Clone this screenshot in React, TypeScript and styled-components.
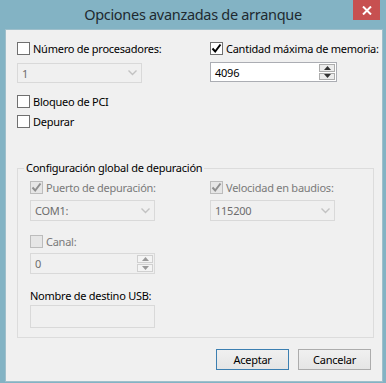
import React from "react";
import styled, { createGlobalStyle } from "styled-components";

const GlobalStyle = createGlobalStyle`
  html, body {
    margin: 0;
    padding: 0;
    background: #83b3c4;
  }
  * {
    box-sizing: border-box;
  }
`;

const Window = styled.div`
  width: 386px;
  height: 383px;
  background: #83b3c4;
  display: flex;
  flex-direction: column;
  font-family: "Noto Sans", "Open Sans", sans-serif;
  font-size: 11px;
  letter-spacing: -0.25px;
  color: #000;
`;

const TitleBar = styled.div`
  height: 29px;
  display: grid;
  grid-template-columns: 1fr auto 1fr;
  padding-right: 6px;
`;

const Title = styled.div`
  grid-column: 2;
  font-size: 14.5px;
  color: #1e2a30;
  line-height: 29px;
  padding-left: 6px;
  letter-spacing: -0.3px;
`;

const CloseButton = styled.div`
  grid-column: 3;
  justify-self: end;
  width: 27px;
  height: 20px;
  background: #c75050;
  display: flex;
  align-items: center;
  justify-content: center;
`;

const Client = styled.div`
  flex: 1;
  margin: 0 3px 1px 5px;
  background: #f0f0f0;
  border: 1px solid #9fbfcb;
  padding: 12px 0 0 11px;
  display: flex;
  flex-direction: column;
`;

const Columns = styled.div<{ $left: number }>`
  display: grid;
  grid-template-columns: ${(p) => p.$left}px 1fr;
`;

const Column = styled.div<{ $gap: number }>`
  display: flex;
  flex-direction: column;
  gap: ${(p) => p.$gap}px;
`;

const CheckRow = styled.label<{ $top?: number; $disabled?: boolean }>`
  display: flex;
  align-items: center;
  height: 13px;
  gap: 3px;
  margin-top: ${(p) => p.$top ?? 0}px;
  color: ${(p) => (p.$disabled ? "#7a7a7a" : "#000")};
  white-space: nowrap;
`;

const Box = styled.span<{ $disabled?: boolean }>`
  width: 13px;
  height: 13px;
  flex: none;
  border: 1px solid ${(p) => (p.$disabled ? "#bcbcbc" : "#707070")};
  background: ${(p) => (p.$disabled ? "#e6e6e6" : "#fff")};
  display: flex;
  align-items: center;
  justify-content: center;
`;

const Field = styled.div<{ $w: number; $h: number; $disabled?: boolean }>`
  width: ${(p) => p.$w}px;
  height: ${(p) => p.$h}px;
  border: 1px solid ${(p) => (p.$disabled ? "#d9d9d9" : "#abadb3")};
  background: ${(p) => (p.$disabled ? "#f0f0f0" : "#fff")};
  color: ${(p) => (p.$disabled ? "#6d6d6d" : "#000")};
  display: flex;
  align-items: center;
  padding-left: 4px;
`;

const FieldText = styled.span`
  flex: 1;
`;

const Chevron = styled.span`
  width: 17px;
  display: flex;
  justify-content: center;
`;

const SpinButtons = styled.div`
  width: 17px;
  height: 100%;
  display: flex;
  flex-direction: column;
  gap: 1px;
  padding: 1px 1px 1px 0;
`;

const SpinButton = styled.div<{ $disabled?: boolean }>`
  flex: 1;
  border: 1px solid ${(p) => (p.$disabled ? "#d0d0d0" : "#acacac")};
  background: ${(p) => (p.$disabled ? "#f4f4f4" : "#ececec")};
  display: flex;
  align-items: center;
  justify-content: center;
`;

const Group = styled.fieldset`
  margin: 33px 0 0 0;
  width: 357px;
  padding: 6px 0 9px 12px;
  border: 1px solid #dcdcdc;
  border-radius: 0;
  display: flex;
  flex-direction: column;
`;

const Legend = styled.legend`
  margin-left: -6px;
  padding: 0 2px;
  line-height: 14px;
  color: #000;
`;

const PlainLabel = styled.div`
  margin-top: 14px;
  line-height: 15px;
  color: #000;
`;

const Footer = styled.div`
  display: flex;
  justify-content: flex-end;
  gap: 9px;
  margin-top: 11px;
  padding-right: 11px;
`;

const Button = styled.div<{ $default?: boolean }>`
  width: 73px;
  height: 21px;
  border: 1px solid ${(p) => (p.$default ? "#3c7fb1" : "#acacac")};
  background: linear-gradient(#f0f0f0, #e5e5e5);
  display: flex;
  align-items: center;
  justify-content: center;
  color: #000;
`;

const Check = ({ checked, disabled }: { checked?: boolean; disabled?: boolean }) => (
  <Box $disabled={disabled}>
    {checked && (
      <svg width="11" height="11" viewBox="0 0 11 11">
        <path
          d="M1.5 5.5 L4.2 8.5 L9.5 1.5"
          fill="none"
          stroke={disabled ? "#8f8f8f" : "#000"}
          strokeWidth="2"
        />
      </svg>
    )}
  </Box>
);

const Checkbox = ({
  label,
  checked,
  disabled,
  top,
}: {
  label: string;
  checked?: boolean;
  disabled?: boolean;
  top?: number;
}) => (
  <CheckRow $top={top} $disabled={disabled}>
    <Check checked={checked} disabled={disabled} />
    {label}
  </CheckRow>
);

const Combo = ({ value, w, h }: { value: string; w: number; h: number }) => (
  <Field $w={w} $h={h} $disabled>
    <FieldText>{value}</FieldText>
    <Chevron>
      <svg width="9" height="6" viewBox="0 0 9 6">
        <path d="M0.5 0.5 L4.5 4.5 L8.5 0.5" fill="none" stroke="#c2c2c2" strokeWidth="1.4" />
      </svg>
    </Chevron>
  </Field>
);

const Spin = ({ value, w, h, disabled }: { value: string; w: number; h: number; disabled?: boolean }) => {
  const c = disabled ? "#9a9a9a" : "#333";
  return (
    <Field $w={w} $h={h} $disabled={disabled}>
      <FieldText>{value}</FieldText>
      <SpinButtons>
        <SpinButton $disabled={disabled}>
          <svg width="7" height="4" viewBox="0 0 7 4">
            <path d="M0 4 L3.5 0 L7 4 Z" fill={c} />
          </svg>
        </SpinButton>
        <SpinButton $disabled={disabled}>
          <svg width="7" height="4" viewBox="0 0 7 4">
            <path d="M0 0 L3.5 4 L7 0 Z" fill={c} />
          </svg>
        </SpinButton>
      </SpinButtons>
    </Field>
  );
};

export default function App() {
  return (
    <>
      <GlobalStyle />
      <Window>
        <TitleBar>
          <Title>Opciones avanzadas de arranque</Title>
          <CloseButton>
            <svg width="10" height="9" viewBox="0 0 10 9">
              <path d="M1 0.5 L9 8.5 M9 0.5 L1 8.5" stroke="#fff" strokeWidth="2" />
            </svg>
          </CloseButton>
        </TitleBar>
        <Client>
          <Columns $left={193}>
            <Column $gap={8}>
              <Checkbox label="Número de procesadores:" />
              <Combo value="1" w={125} h={20} />
            </Column>
            <Column $gap={7}>
              <Checkbox label="Cantidad máxima de memoria:" checked />
              <Spin value="4096" w={127} h={20} />
            </Column>
          </Columns>
          <Checkbox label="Bloqueo de PCI" top={12} />
          <Checkbox label="Depurar" top={7} />
          <Group>
            <Legend>Configuración global de depuración</Legend>
            <Columns $left={180}>
              <Column $gap={6}>
                <Checkbox label="Puerto de depuración:" checked disabled />
                <Combo value="COM1:" w={125} h={21} />
              </Column>
              <Column $gap={6}>
                <Checkbox label="Velocidad en baudios:" checked disabled />
                <Combo value="115200" w={125} h={21} />
              </Column>
            </Columns>
            <Checkbox label="Canal:" disabled top={14} />
            <Column $gap={5}>
              <span />
              <Spin value="0" w={125} h={21} disabled />
            </Column>
            <PlainLabel>Nombre de destino USB:</PlainLabel>
            <Column $gap={2}>
              <span />
              <Field $w={125} $h={23} $disabled />
            </Column>
          </Group>
          <Footer>
            <Button $default>Aceptar</Button>
            <Button>Cancelar</Button>
          </Footer>
        </Client>
      </Window>
    </>
  );
}
